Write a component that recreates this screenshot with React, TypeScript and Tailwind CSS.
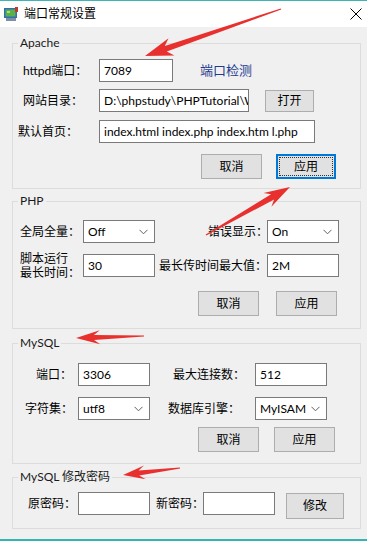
import React from "react";

const FONT = { fontFamily: 'Lato, "Noto Sans CJK SC", sans-serif' };

type Pt = [number, number];

// red annotation arrow: thin tail, widening shaft, pointed head
const arrowPoints = (tail: Pt, tip: Pt, headLen: number, headHalf: number, shaftHalf: number) => {
  const dx = tip[0] - tail[0];
  const dy = tip[1] - tail[1];
  const len = Math.hypot(dx, dy);
  const ux = dx / len;
  const uy = dy / len;
  const nx = -uy;
  const ny = ux;
  const bx = tip[0] - ux * headLen;
  const by = tip[1] - uy * headLen;
  const back = 4;
  const pts: Pt[] = [
    [tail[0] + nx * 0.6, tail[1] + ny * 0.6],
    [bx + nx * shaftHalf + ux * 2, by + ny * shaftHalf + uy * 2],
    [bx + nx * headHalf - ux * back, by + ny * headHalf - uy * back],
    tip,
    [bx - nx * headHalf - ux * back, by - ny * headHalf - uy * back],
    [bx - nx * shaftHalf + ux * 2, by - ny * shaftHalf + uy * 2],
    [tail[0] - nx * 0.6, tail[1] - ny * 0.6],
  ];
  return pts.map((p) => `${p[0].toFixed(1)},${p[1].toFixed(1)}`).join(" ");
};

const Input = ({ w, value = "" }: { w: string; value?: string }) => (
  <div className={`${w} h-[23px] shrink-0 border border-[#7a7a7a] bg-white flex items-center px-[4px] overflow-hidden whitespace-nowrap text-[12px] text-black`}>
    {value}
  </div>
);

const Select = ({ w, value }: { w: string; value: string }) => (
  <div className={`${w} h-[23px] shrink-0 border border-[#7a7a7a] bg-white flex items-center justify-between pl-[4px] pr-[6px] text-[12px] text-black`}>
    <span>{value}</span>
    <svg width="9" height="6" viewBox="0 0 9 6">
      <polyline points="0.5,0.8 4.5,4.8 8.5,0.8" fill="none" stroke="#606060" strokeWidth="1" />
    </svg>
  </div>
);

const Btn = ({ w, h = "h-[25px]", label, focused }: { w: string; h?: string; label: string; focused?: boolean }) =>
  focused ? (
    <div className={`${w} ${h} shrink-0 border-2 border-[#0078d7] bg-[#e1e1e1] p-[1px]`}>
      <div className="w-full h-full border border-dotted border-[#333] flex items-center justify-center text-[12px] text-black">
        {label}
      </div>
    </div>
  ) : (
    <div className={`${w} ${h} shrink-0 border border-[#adadad] bg-[#e1e1e1] flex items-center justify-center text-[12px] text-black`}>
      {label}
    </div>
  );

const Group = ({ title, className = "", children }: { title: string; className?: string; children: React.ReactNode }) => (
  <fieldset className={`w-[349px] border border-[#dcdcdc] ${className}`}>
    <legend className="ml-[5px] px-[2px] text-[12px] leading-[16px] text-[#1a1a1a]">{title}</legend>
    {children}
  </fieldset>
);

export default function App() {
  return (
    <div className="w-[367px] h-[541px] bg-[#f0f0f0] relative overflow-hidden flex flex-col text-[12px] text-black" style={FONT}>
      {/* title bar */}
      <div className="h-[27px] shrink-0 bg-white border-t border-[#3fb4b4] flex items-center">
        <svg className="ml-[3px]" width="16" height="15" viewBox="0 0 16 15">
          <rect x="1" y="1" width="13" height="10" fill="#2f6fb8" />
          <rect x="2.5" y="2.5" width="10" height="7" fill="#5bb04a" />
          <rect x="4" y="4" width="3" height="2" fill="#a8dc7a" />
          <rect x="3" y="11" width="10" height="3" fill="#7d8ea6" />
          <rect x="12" y="0" width="3" height="5" fill="#c0392b" />
        </svg>
        <span className="ml-[5px] text-[12px]">端口常规设置</span>
        <svg className="ml-auto mr-[5px]" width="12" height="12" viewBox="0 0 12 12">
          <path d="M0.5 0.5 L11.5 11.5 M11.5 0.5 L0.5 11.5" stroke="#000" strokeWidth="1" />
        </svg>
      </div>

      <div className="pl-[12px] flex flex-col">
        {/* Apache */}
        <Group title="Apache" className="mt-[8px]">
          <div className="flex flex-col pb-[9px]">
            <div className="mt-[8px] h-[23px] flex items-center">
              <span className="w-[86px] pl-[10px] whitespace-nowrap">httpd端口：</span>
              <Input w="w-[74px]" value="7089" />
              <span className="ml-[27px] text-[13px] text-[#1f3b8f]">端口检测</span>
            </div>
            <div className="mt-[7px] h-[23px] flex items-center">
              <span className="w-[86px] pl-[10px] whitespace-nowrap">网站目录：</span>
              <Input w="w-[150px]" value="D:\phpstudy\PHPTutorial\WW" />
              <div className="ml-[16px]">
                <Btn w="w-[49px]" h="h-[22px]" label="打开" />
              </div>
            </div>
            <div className="mt-[8px] h-[23px] flex items-center">
              <span className="w-[86px] pl-[5px] whitespace-nowrap">默认首页：</span>
              <Input w="w-[216px]" value="index.html index.php index.htm l.php" />
            </div>
            <div className="mt-[11px] flex pl-[188px] gap-[14px]">
              <Btn w="w-[61px]" label="取消" />
              <Btn w="w-[60px]" label="应用" focused />
            </div>
          </div>
        </Group>

        {/* PHP */}
        <Group title="PHP" className="mt-[4px]">
          <div className="flex flex-col pb-[12px]">
            <div className="mt-[11px] h-[23px] flex items-center">
              <span className="w-[70px] pl-[7px] whitespace-nowrap">全局全量：</span>
              <Select w="w-[72px]" value="Off" />
              <span className="ml-[53px] w-[59px] whitespace-nowrap">错误显示：</span>
              <Select w="w-[72px]" value="On" />
            </div>
            <div className="mt-[11px] h-[23px] flex items-center">
              <div className="w-[70px] pl-[7px] flex flex-col whitespace-nowrap">
                <span className="h-[14px] leading-[14px]">脚本运行</span>
                <span className="h-[14px] leading-[14px]">最长时间：</span>
              </div>
              <Input w="w-[72px]" value="30" />
              <span className="ml-[4px] w-[108px] whitespace-nowrap">最长传时间最大值：</span>
              <Input w="w-[72px]" value="2M" />
            </div>
            <div className="mt-[14px] flex pl-[185px] gap-[17px]">
              <Btn w="w-[61px]" label="取消" />
              <Btn w="w-[61px]" label="应用" />
            </div>
          </div>
        </Group>

        {/* MySQL */}
        <Group title="MySQL" className="mt-[6px]">
          <div className="flex flex-col pb-[11px]">
            <div className="mt-[12px] h-[23px] flex items-center">
              <span className="w-[65px] pl-[23px] whitespace-nowrap">端口：</span>
              <Input w="w-[72px]" value="3306" />
              <span className="ml-[23px] w-[82px] whitespace-nowrap">最大连接数：</span>
              <Input w="w-[72px]" value="512" />
            </div>
            <div className="mt-[11px] h-[23px] flex items-center">
              <span className="w-[65px] pl-[12px] whitespace-nowrap">字符集：</span>
              <Select w="w-[72px]" value="utf8" />
              <span className="ml-[18px] w-[87px] whitespace-nowrap">数据库引擎：</span>
              <Select w="w-[72px]" value="MyISAM" />
            </div>
            <div className="mt-[7px] flex pl-[185px] gap-[15px]">
              <Btn w="w-[61px]" label="取消" />
              <Btn w="w-[61px]" label="应用" />
            </div>
          </div>
        </Group>

        {/* MySQL password */}
        <Group title="MySQL 修改密码" className="mt-[5px]">
          <div className="mt-[7px] pb-[9px] flex items-start">
            <span className="w-[65px] pl-[15px] h-[23px] flex items-center whitespace-nowrap">原密码：</span>
            <Input w="w-[72px]" />
            <span className="ml-[6px] w-[47px] h-[23px] flex items-center whitespace-nowrap">新密码：</span>
            <Input w="w-[72px]" />
            <div className="ml-[11px] mt-[1px]">
              <Btn w="w-[58px]" h="h-[26px]" label="修改" />
            </div>
          </div>
        </Group>
      </div>

      <div className="mt-auto h-[2px] bg-[#36b3b3]" />

      {/* red annotation arrows lying over the dialog */}
      <svg className="absolute inset-0 pointer-events-none" width="367" height="541">
        <g fill="#e8312f">
          <polygon points={arrowPoints([281, 9], [145, 56], 24, 9, 3)} />
          <polygon points={arrowPoints([206, 235], [290, 187], 22, 8, 3)} />
          <polygon points={arrowPoints([144, 336], [76, 338], 20, 7, 2.5)} />
          <polygon points={arrowPoints([180, 468], [123, 475], 18, 7, 2.5)} />
        </g>
      </svg>
    </div>
  );
}
